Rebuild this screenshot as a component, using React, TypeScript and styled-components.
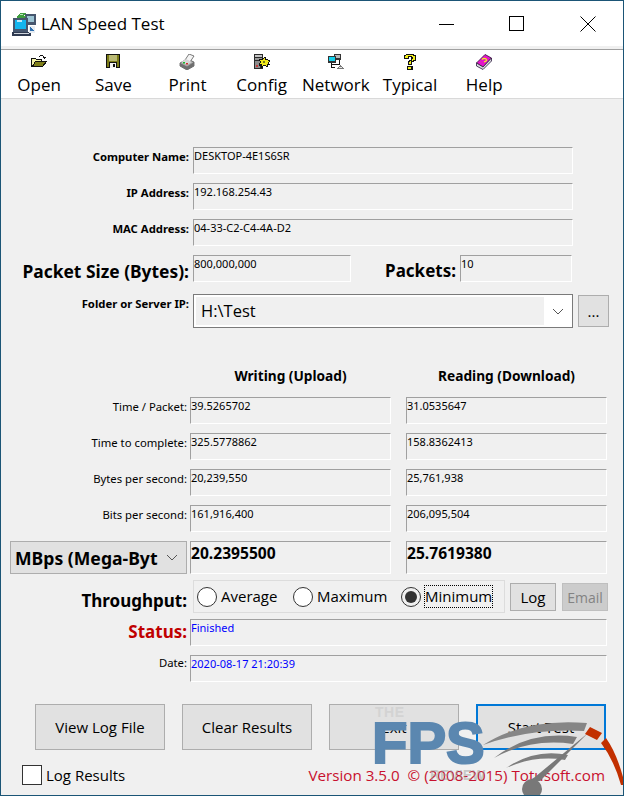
import React from "react";
import styled, { createGlobalStyle } from "styled-components";

const GlobalStyle = createGlobalStyle`
  html, body {
    margin: 0;
    padding: 0;
    background: #f0f0f0;
  }
  * {
    box-sizing: border-box;
  }
`;

const uiFont = `"Open Sans", "Noto Sans", sans-serif`;
const smallFont = `"Noto Sans", "Open Sans", sans-serif`;

const AppIcon = () => (
  <svg width="24" height="24" viewBox="0 0 24 24" shapeRendering="crispEdges">
    <rect x="13" y="2" width="11" height="11" fill="#46566e" />
    <rect x="15" y="4" width="7" height="6" fill="#9cc4d4" />
    <rect x="1" y="6" width="15" height="14" fill="#46566e" />
    <rect x="3" y="8" width="11" height="9" fill="#13b5ee" />
    <rect x="5" y="8" width="5" height="2" fill="#bfeafa" />
    <path d="M4 5l4-4h6l-3 3h3l-2 2H5z" fill="#3f9e3f" />
    <rect x="8" y="2" width="3" height="1" fill="#bfe6bf" />
    <rect x="0" y="20" width="19" height="4" fill="#2f3a50" />
    <rect x="2" y="21" width="15" height="1" fill="#cfd4dc" />
    <rect x="17" y="14" width="6" height="7" fill="#e6ecf2" />
    <path d="M18 15l4 4h-4z" fill="#2d6fb0" />
  </svg>
);

const OpenIcon = () => (
  <svg width="16" height="14" viewBox="0 0 16 14" shapeRendering="crispEdges">
    <path d="M0.500 4.500h4l1 1h5v7h-10z" fill="#f4f4a8" stroke="#111" />
    <path d="M4.500 7.500h11l-4 5h-10z" fill="#80801a" stroke="#111" />
    <path d="M8 3V2h1V1h3v1h1v1h2l-2 2-2-2h1V2H9v1z" fill="#111" />
  </svg>
);

const SaveIcon = () => (
  <svg width="14" height="14" viewBox="0 0 14 14" shapeRendering="crispEdges">
    <rect x="0" y="0" width="14" height="14" fill="#111" />
    <rect x="1" y="1" width="12" height="12" fill="#7c7c18" />
    <rect x="3" y="1" width="8" height="6" fill="#b9b974" />
    <rect x="3" y="8" width="8" height="6" fill="#111" />
    <rect x="4" y="9" width="6" height="5" fill="#f4f4f4" />
    <rect x="7" y="10" width="2" height="3" fill="#111" />
  </svg>
);

const PrintIcon = () => (
  <svg width="16" height="16" viewBox="0 0 16 16">
    <path d="M1 9l7-4 7 3v4l-7 4-7-4z" fill="#a9a9a9" stroke="#444" strokeWidth="0.7" />
    <path d="M1 9l7 3.500 7-4.500v4l-7 4-7-4z" fill="#6f6f6f" />
    <path d="M6 6l4-6 5 2-4 6z" fill="#f4f4f4" stroke="#444" strokeWidth="0.7" />
    <path d="M2 8l5-3 6 3-5 3z" fill="#d6d6d6" />
    <rect x="4" y="8" width="2" height="1.500" fill="#19b82a" />
    <rect x="7" y="9" width="2" height="1.500" fill="#d02a2a" />
  </svg>
);

const ConfigIcon = () => (
  <svg width="16" height="15" viewBox="0 0 16 15" shapeRendering="crispEdges">
    <rect x="0" y="0" width="9" height="15" fill="#2a2a2a" />
    <rect x="1" y="1" width="7" height="2" fill="#c4c4c4" />
    <rect x="1" y="4" width="7" height="2" fill="#9a9a9a" />
    <rect x="1" y="7" width="5" height="7" fill="#8c8c8c" />
    <rect x="2" y="11" width="2" height="2" fill="#c53a3a" />
    <path d="M10 3h2v2h2v1h2v2h-1v2h1v1h-2v2h-2v-1H9v2H7v-2H5V9h1V7H5V5h3V4h2z" fill="#111" />
    <path d="M10 4h1v2h3v1h1v1h-1v2h1v0h-2v2h-1v-1H9v1H8v-2H6V9h1V7H6V6h3V5h1z" fill="#f0e81a" />
    <rect x="9" y="7" width="2" height="2" fill="#7c7c18" />
  </svg>
);

const NetworkIcon = () => (
  <svg width="16" height="15" viewBox="0 0 16 15" shapeRendering="crispEdges">
    <rect x="6" y="0" width="7" height="6" fill="#333" />
    <rect x="7" y="1" width="5" height="3" fill="#b9b9b9" />
    <rect x="0" y="2" width="8" height="7" fill="#333" />
    <rect x="1" y="3" width="6" height="4" fill="#14d0ec" />
    <rect x="3" y="9" width="1" height="5" fill="#111" />
    <rect x="3" y="13" width="4" height="1" fill="#111" />
    <rect x="4" y="10" width="8" height="1" fill="#111" />
    <rect x="11" y="6" width="1" height="5" fill="#111" />
    <path d="M12 11h1v1h1v1h1v1h1v1H9v-1h1v-1h1v-1h1z" fill="#777" />
    <rect x="11" y="13" width="3" height="1" fill="#e4e4e4" />
  </svg>
);

const TypicalIcon = () => (
  <svg width="14" height="16" viewBox="0 0 14 16" shapeRendering="crispEdges">
    <path d="M3 0h8v1h2v6h-2v1H9v3H5V7h1V6h2V3H6v2H1V1h2z" fill="#111" />
    <path d="M3 1h7v1h2v4h-2v1H8v3H6V8h1V7h2V5h1V3H9V2H5v2H2V2h1z" fill="#f4f01c" />
    <rect x="4" y="12" width="6" height="4" fill="#111" />
    <rect x="5" y="13" width="3" height="2" fill="#f4f01c" />
  </svg>
);

const HelpIcon = () => (
  <svg width="16" height="16" viewBox="0 0 16 16">
    <path d="M0.500 9L9 0.500 15.500 4 7 13z" fill="#e414c8" stroke="#2b1b3b" strokeWidth="0.8" />
    <path d="M0.500 9L7 13 15.500 4v3L7 15.500 0.500 12z" fill="#d9d9e0" stroke="#2b1b3b" strokeWidth="0.8" />
    <path d="M6 5.500Q8 3.500 10 5T8 8" fill="none" stroke="#f4f01c" strokeWidth="1.300" />
  </svg>
);

const Chevron = () => (
  <svg width="12" height="7" viewBox="0 0 12 7">
    <path d="M1 1l5 5 5-5" fill="none" stroke="#555" strokeWidth="1" />
  </svg>
);

const Window = styled.div`
  position: relative;
  width: 624px;
  height: 796px;
  overflow: hidden;
  background: #f0f0f0;
  border: 1px solid #1b5576;
  font-family: ${uiFont};
  color: #000;
`;

const TitleBar = styled.div`
  display: flex;
  align-items: center;
  height: 45px;
  padding-left: 11px;
  background: #fff;
`;

const TitleText = styled.span`
  margin-left: 5px;
  font-size: 17px;
  color: #000;
`;

const WindowControls = styled.div`
  display: flex;
  margin-left: auto;
`;

const ControlButton = styled.div`
  display: flex;
  align-items: center;
  justify-content: center;
  width: 70.5px;
  height: 45px;
`;

const ToolbarGap = styled.div`
  height: 3px;
  background: #f0f0f0;
`;

const Toolbar = styled.div`
  display: flex;
  height: 50px;
  padding-left: 1px;
  background: #fff;
  border-top: 1px solid #a0a0a0;
  border-bottom: 1px solid #d9d9d9;
`;

const ToolButton = styled.div`
  display: flex;
  flex-direction: column;
  align-items: center;
  width: 74.2px;
  padding-top: 4px;
`;

const ToolIcon = styled.div`
  display: flex;
  justify-content: center;
  align-items: flex-start;
  height: 16px;
`;

const ToolLabel = styled.span`
  margin-top: 3px;
  font-size: 17px;
  line-height: 24px;
`;

const Form = styled.div`
  display: flex;
  flex-direction: column;
  padding-top: 48px;
`;

const InfoRow = styled.div`
  display: grid;
  grid-template-columns: 188px 380px;
  column-gap: 4px;
  height: 27px;
  margin-bottom: 9px;
`;

const Label = styled.span<{ $size?: number; $color?: string; $weight?: number; $top?: number }>`
  padding-top: ${(p) => p.$top ?? 2}px;
  font-family: ${smallFont};
  font-size: ${(p) => p.$size ?? 11.3}px;
  font-weight: ${(p) => p.$weight ?? 700};
  line-height: 16px;
  color: ${(p) => p.$color ?? "#000"};
  text-align: right;
  white-space: nowrap;
`;

const Field = styled.div<{ $bold?: boolean; $color?: string; $height?: number }>`
  height: ${(p) => p.$height ?? 27}px;
  padding: ${(p) => (p.$bold ? 2 : 0)}px 0 0 0;
  border-top: 1px solid #a0a0a0;
  border-left: 1px solid #a0a0a0;
  border-right: 1px solid #fff;
  border-bottom: 1px solid #fff;
  font-family: ${smallFont};
  font-size: ${(p) => (p.$bold ? 15.6 : 11)}px;
  font-weight: ${(p) => (p.$bold ? 700 : 400)};
  line-height: ${(p) => (p.$bold ? 18 : 15)}px;
  color: ${(p) => p.$color ?? "#000"};
`;

const PacketRow = styled.div`
  display: grid;
  grid-template-columns: 188px 158px 101px 112px;
  column-gap: 4px;
  height: 27px;
  margin-bottom: 12px;
`;

const FolderRow = styled.div`
  display: grid;
  grid-template-columns: 188px 380px 32px;
  column-gap: 4px;
  height: 33px;
`;

const FolderCombo = styled.div`
  display: flex;
  border: 1px solid #7a7a7a;
  background: #fff;
`;

const FolderValue = styled.div`
  flex: 1;
  margin: 2px 0 2px 2px;
  padding-left: 5px;
  background: #f0f0f0;
  font-size: 16.500px;
  line-height: 28px;
`;

const ComboArrow = styled.div`
  display: flex;
  align-items: center;
  justify-content: center;
  width: 28px;
`;

const Button = styled.div<{ $disabled?: boolean; $focused?: boolean }>`
  display: flex;
  align-items: center;
  justify-content: center;
  background: ${(p) => (p.$disabled ? "#cccccc" : "#e1e1e1")};
  border: ${(p) => (p.$focused ? "2px solid #0078d7" : `1px solid ${p.$disabled ? "#bfbfbf" : "#adadad"}`)};
  color: ${(p) => (p.$disabled ? "#838383" : "#000")};
  font-size: 15px;
`;

const BrowseButton = styled(Button)`
  height: 32px;
  margin: 1px 0 0 1px;
`;

const ResultsGrid = styled.div`
  display: grid;
  grid-template-columns: 186px 204px 216px;
  grid-auto-rows: 27px;
  row-gap: 9px;
`;

const ValueCell = styled.div<{ $second?: boolean }>`
  margin-left: ${(p) => (p.$second ? 15 : 3)}px;
`;

const ColumnHeading = styled.div<{ $second?: boolean }>`
  height: 20px;
  margin-left: ${(p) => (p.$second ? 15 : 3)}px;
  font-family: ${smallFont};
  font-size: 13.700px;
  font-weight: 700;
  line-height: 18px;
  text-align: center;
`;

const HeadingRow = styled.div`
  display: grid;
  grid-template-columns: 186px 204px 216px;
  margin: 40px 0 10px;
`;

const UnitRow = styled.div`
  display: grid;
  grid-template-columns: 186px 204px 216px;
  height: 33px;
  margin-top: 9px;
`;

const UnitCombo = styled.div`
  display: flex;
  align-items: center;
  justify-content: space-between;
  margin-left: 9px;
  padding: 0 8px 0 4px;
  background: #e1e1e1;
  border: 1px solid #adadad;
  font-family: ${smallFont};
  font-size: 17.600px;
  font-weight: 700;
  white-space: nowrap;
  overflow: hidden;
`;

const ThroughputRow = styled.div`
  display: grid;
  grid-template-columns: 186px 312px 46px 46px;
  height: 33px;
  margin-top: 6px;
`;

const RadioBox = styled.div`
  display: flex;
  align-items: center;
  margin-left: 6px;
  width: 312px;
  height: 33px;
  padding-left: 3px;
  border: 1px solid #dcdcdc;
`;

const RadioOption = styled.label<{ $width: number }>`
  display: flex;
  align-items: center;
  width: ${(p) => p.$width}px;
  font-size: 15px;
`;

const RadioDot = styled.span<{ $checked?: boolean }>`
  display: flex;
  align-items: center;
  justify-content: center;
  flex: none;
  width: 20px;
  height: 20px;
  margin-right: 4px;
  border-radius: 50%;
  border: 1px solid #333;
  background: ${(p) => (p.$checked ? "#f0f0f0" : "#fff")};
  &::after {
    content: "";
    display: ${(p) => (p.$checked ? "block" : "none")};
    width: 12px;
    height: 12px;
    border-radius: 50%;
    background: #333;
  }
`;

const RadioText = styled.span<{ $focused?: boolean }>`
  line-height: 21px;
  outline: ${(p) => (p.$focused ? "1px dotted #000" : "none")};
`;

const SmallButton = styled(Button)`
  width: 46px;
  height: 28px;
  margin-top: 3px;
`;

const LogButton = styled(SmallButton)`
  margin-left: 11px;
`;

const EmailButton = styled(SmallButton)`
  margin-left: 17px;
  font-size: 14px;
`;

const StatusRow = styled.div`
  display: grid;
  grid-template-columns: 186px 417px;
  column-gap: 3px;
  height: 27px;
  margin-top: 6px;
`;

const DateRow = styled(StatusRow)`
  margin-top: 9px;
`;

const ActionRow = styled.div`
  display: flex;
  gap: 17px;
  margin-top: 22px;
  padding-left: 34px;
`;

const ActionButton = styled(Button)`
  width: 130px;
  height: 46px;
`;

const Footer = styled.div`
  display: flex;
  align-items: center;
  margin-top: 15px;
  padding: 0 18px 0 21px;
  height: 20px;
`;

const CheckBox = styled.span`
  width: 20px;
  height: 20px;
  background: #fff;
  border: 1px solid #333;
`;

const CheckLabel = styled.span`
  margin-left: 4px;
  font-size: 15px;
`;

const Version = styled.span`
  margin-left: auto;
  font-size: 15.200px;
  color: #c8102e;
  white-space: pre;
`;

/* the watermark sits on top of the finished window */
const Watermark = styled.div`
  position: absolute;
  left: 359px;
  top: 699px;
  width: 264px;
  height: 96px;
  pointer-events: none;
`;

const WatermarkThe = styled.span`
  position: absolute;
  left: 15px;
  top: 4px;
  font-family: "Liberation Sans", sans-serif;
  font-size: 14px;
  font-weight: 700;
  line-height: 16px;
  letter-spacing: 0.5px;
  color: #d3d3d3;
`;

const WatermarkFps = styled.span`
  position: absolute;
  left: 12px;
  top: 10px;
  font-family: "Liberation Sans", sans-serif;
  font-size: 58px;
  font-weight: 700;
  line-height: 66px;
  color: #5b87b0;
  -webkit-text-stroke: 2px #5b87b0;
`;

const WatermarkReview = styled.span`
  position: absolute;
  left: 70px;
  top: 67px;
  font-family: "Liberation Sans", sans-serif;
  font-size: 14px;
  font-weight: 700;
  line-height: 16px;
  color: rgba(150, 150, 150, 0.45);
`;

const GaugeSvg = styled.svg`
  position: absolute;
  left: 0;
  top: 0;
`;

const tools = [
  { label: "Open", icon: <OpenIcon /> },
  { label: "Save", icon: <SaveIcon /> },
  { label: "Print", icon: <PrintIcon /> },
  { label: "Config", icon: <ConfigIcon /> },
  { label: "Network", icon: <NetworkIcon /> },
  { label: "Typical", icon: <TypicalIcon /> },
  { label: "Help", icon: <HelpIcon /> },
];

const results = [
  { label: "Time / Packet:", up: "39.5265702", down: "31.0535647" },
  { label: "Time to complete:", up: "325.5778862", down: "158.8362413" },
  { label: "Bytes per second:", up: "20,239,550", down: "25,761,938" },
  { label: "Bits per second:", up: "161,916,400", down: "206,095,504" },
];

const App = () => {
  return (
    <>
      <GlobalStyle />
      <Window>
        <TitleBar>
          <AppIcon />
          <TitleText>LAN Speed Test</TitleText>
          <WindowControls>
            <ControlButton>
              <svg width="16" height="16" viewBox="0 0 16 16">
                <path d="M0 8.500h15" stroke="#000" strokeWidth="1" />
              </svg>
            </ControlButton>
            <ControlButton>
              <svg width="16" height="16" viewBox="0 0 16 16">
                <rect x="0.500" y="0.500" width="14" height="14" fill="none" stroke="#000" strokeWidth="1" />
              </svg>
            </ControlButton>
            <ControlButton>
              <svg width="16" height="16" viewBox="0 0 16 16">
                <path d="M0.500 0.500l15 15M15.500 0.500l-15 15" stroke="#000" strokeWidth="1" />
              </svg>
            </ControlButton>
          </WindowControls>
        </TitleBar>
        <ToolbarGap />
        <Toolbar>
          {tools.map((tool) => (
            <ToolButton key={tool.label}>
              <ToolIcon>{tool.icon}</ToolIcon>
              <ToolLabel>{tool.label}</ToolLabel>
            </ToolButton>
          ))}
        </Toolbar>
        <Form>
          <InfoRow>
            <Label>Computer Name:</Label>
            <Field>DESKTOP-4E1S6SR</Field>
          </InfoRow>
          <InfoRow>
            <Label>IP Address:</Label>
            <Field>192.168.254.43</Field>
          </InfoRow>
          <InfoRow>
            <Label>MAC Address:</Label>
            <Field>04-33-C2-C4-4A-D2</Field>
          </InfoRow>
          <PacketRow>
            <Label $size={17.4} $top={8}>Packet Size (Bytes):</Label>
            <Field>800,000,000</Field>
            <Label $size={17} $top={8}>Packets:</Label>
            <Field>10</Field>
          </PacketRow>
          <FolderRow>
            <Label $top={2}>Folder or Server IP:</Label>
            <FolderCombo>
              <FolderValue>H:\Test</FolderValue>
              <ComboArrow>
                <Chevron />
              </ComboArrow>
            </FolderCombo>
            <BrowseButton>...</BrowseButton>
          </FolderRow>

          <HeadingRow>
            <span />
            <ColumnHeading>Writing (Upload)</ColumnHeading>
            <ColumnHeading $second>Reading (Download)</ColumnHeading>
          </HeadingRow>
          <ResultsGrid>
            {results.map((row) => (
              <React.Fragment key={row.label}>
                <Label $weight={400}>{row.label}</Label>
                <ValueCell>
                  <Field>{row.up}</Field>
                </ValueCell>
                <ValueCell $second>
                  <Field>{row.down}</Field>
                </ValueCell>
              </React.Fragment>
            ))}
          </ResultsGrid>
          <UnitRow>
            <UnitCombo>
              <span>MBps (Mega-Byt</span>
              <Chevron />
            </UnitCombo>
            <ValueCell>
              <Field $bold $height={33}>20.2395500</Field>
            </ValueCell>
            <ValueCell $second>
              <Field $bold $height={33}>25.7619380</Field>
            </ValueCell>
          </UnitRow>
          <ThroughputRow>
            <Label $size={17} $top={13}>Throughput:</Label>
            <RadioBox>
              <RadioOption $width={96}>
                <RadioDot />
                <RadioText>Average</RadioText>
              </RadioOption>
              <RadioOption $width={108}>
                <RadioDot />
                <RadioText>Maximum</RadioText>
              </RadioOption>
              <RadioOption $width={100}>
                <RadioDot $checked />
                <RadioText $focused>Minimum</RadioText>
              </RadioOption>
            </RadioBox>
            <LogButton>Log</LogButton>
            <EmailButton $disabled>Email</EmailButton>
          </ThroughputRow>
          <StatusRow>
            <Label $size={17} $color="#c00000" $top={5}>Status:</Label>
            <Field $color="#0000ff">Finished</Field>
          </StatusRow>
          <DateRow>
            <Label $weight={400} $top={0}>Date:</Label>
            <Field $color="#0000ff">2020-08-17 21:20:39</Field>
          </DateRow>
          <ActionRow>
            <ActionButton>View Log File</ActionButton>
            <ActionButton>Clear Results</ActionButton>
            <ActionButton>Exit</ActionButton>
            <ActionButton $focused>Start Test</ActionButton>
          </ActionRow>
          <Footer>
            <CheckBox />
            <CheckLabel>Log Results</CheckLabel>
            <Version>Version 3.5.0  © (2008-2015) Totusoft.com</Version>
          </Footer>
        </Form>
        <Watermark>
          <WatermarkThe>THE</WatermarkThe>
          <WatermarkFps>FPS</WatermarkFps>
          <WatermarkReview>REVIEW</WatermarkReview>
          <GaugeSvg width="264" height="96" viewBox="360 700 264 96">
            <path d="M483 745Q525 718 587 723L584 731Q530 728 483 745Z" fill="#868686" />
            <path d="M494 758Q530 730 577 737L573 744Q530 738 494 758Z" fill="#7d7d7d" />
            <path d="M506 768Q535 748 568 755L565 760Q535 755 506 768Z" fill="#7d7d7d" />
            <path d="M588 733L540 781L527 782L535 777Z" fill="#787878" />
            <circle cx="532" cy="789" r="10" fill="#787878" />
            <path d="M590 727L602 733L597 740L585 734Z" fill="#c23000" />
            <path d="M606 738Q618 755 625 785L621 785Q614 760 601 743Z" fill="#c23000" />
          </GaugeSvg>
        </Watermark>
      </Window>
    </>
  );
};

export default App;
